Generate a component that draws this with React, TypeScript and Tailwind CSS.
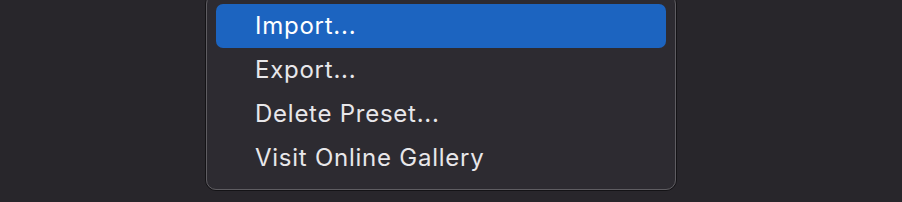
const items = ['Import...', 'Export...', 'Delete Preset...', 'Visit Online Gallery']

export default function App() {
  return (
    <div className="h-[202px] w-[902px] overflow-hidden bg-[#28262b] font-['Inter','Liberation_Sans',sans-serif]">
      <div className="ml-[205px] mt-[-7px] w-[472px] rounded-[11px] border border-[#141316]">
        <div className="rounded-[10px] border border-[#5f5d62] bg-[#2d2b31] px-[9px] pb-[9px] pt-[9px]">
          {items.map((label, i) => (
            <div
              key={label}
              className={
                i === 0
                  ? 'flex h-[44px] items-center rounded-[7px] bg-[#1c64c0] pl-[39px] text-[24px] tracking-[0.75px] text-white'
                  : 'flex h-[44px] items-center pl-[39px] text-[24px] tracking-[0.75px] text-[#e8e7ea]'
              }
            >
              {label}
            </div>
          ))}
        </div>
      </div>
    </div>
  )
}
